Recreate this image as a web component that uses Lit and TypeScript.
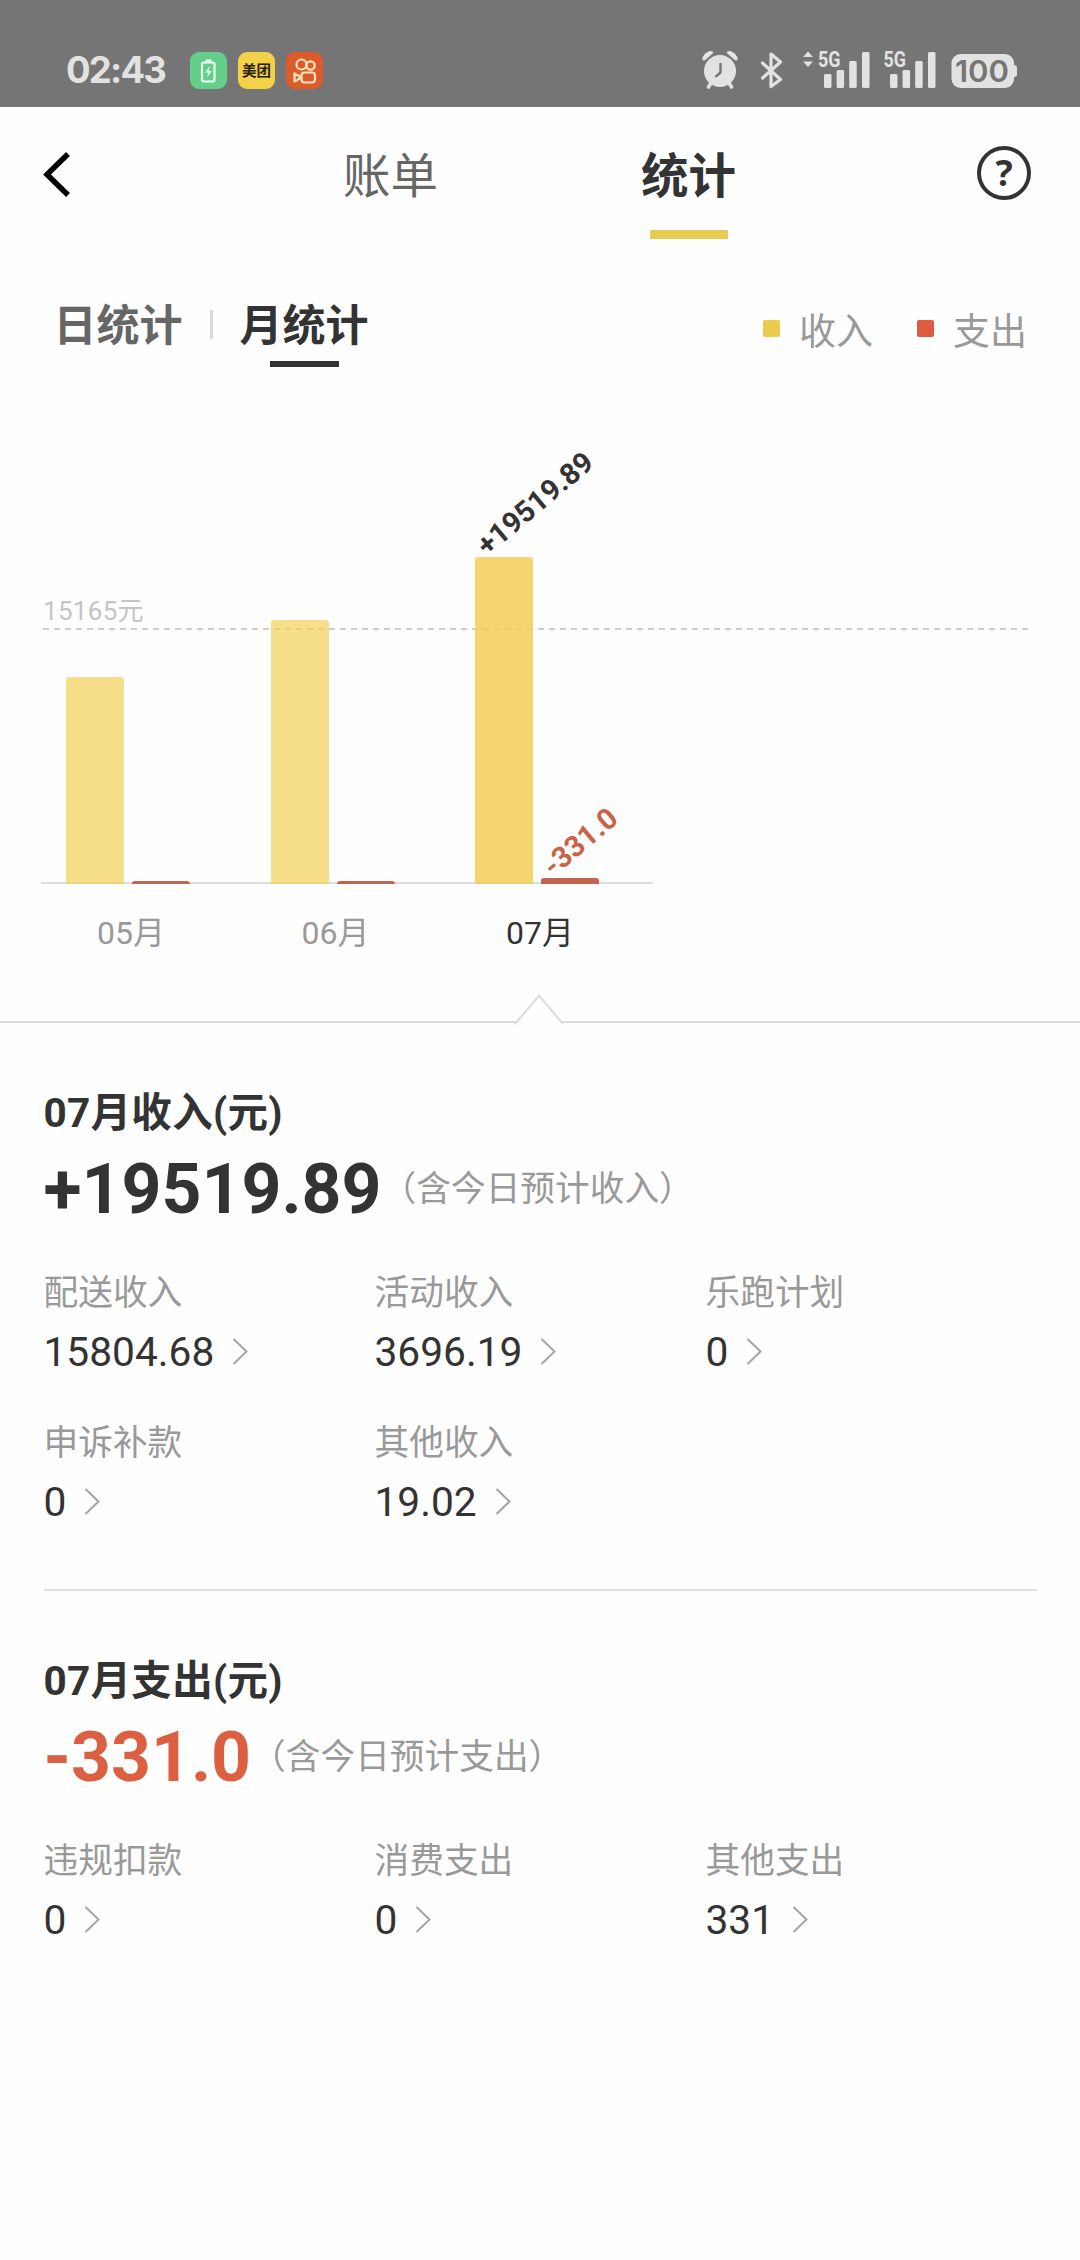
import { LitElement, html, css, svg } from "lit";
import { customElement, property } from "lit/decorators.js";

interface Item { label: string; value: string; }
interface Bar { month: string; income: number; expense: number; current?: boolean; }

const INCOME: Item[] = [
  { label: "配送收入", value: "15804.68" },
  { label: "活动收入", value: "3696.19" },
  { label: "乐跑计划", value: "0" },
  { label: "申诉补款", value: "0" },
  { label: "其他收入", value: "19.02" },
];
const EXPENSE: Item[] = [
  { label: "违规扣款", value: "0" },
  { label: "消费支出", value: "0" },
  { label: "其他支出", value: "331" },
];
const BARS: Bar[] = [
  { month: "05月", income: 207, expense: 3 },
  { month: "06月", income: 264, expense: 3 },
  { month: "07月", income: 327, expense: 6, current: true },
];

@customElement("status-bar")
class StatusBar extends LitElement {
  static styles = css`
    :host { display: flex; align-items: flex-start; justify-content: space-between; height: 107px; box-sizing: border-box; background: #757575; color: #e2e2e2; padding: 40px 61px 0 66px; }
    .side { display: flex; align-items: center; height: 40px; margin-top: 10px; }
    .time { font: 650 36.5px/40px Inter, sans-serif; width: 124px; letter-spacing: -1.8px; }
    .app { width: 37px; height: 37px; border-radius: 9px; margin-right: 11px; display: flex; align-items: center; justify-content: center; }
    .green { background: #63cf88; }
    .yellow { background: #f3d148; color: #2a2210; font: 700 14.5px/20px "Noto Sans CJK SC", sans-serif; }
    .orange { background: #dd5a2a; }
    svg { display: block; }
    .icons text { font: 700 21.5px Roboto, sans-serif; fill: #e2e2e2; }
    .icons .full { font: 600 30px Inter, sans-serif; fill: #757575; }
  `;
  render() {
    const signal = (x: number) => svg`
      <rect x=${x} y="34" width="7.5" height="14" rx="1.5"/>
      <rect x=${x + 12.6} y="30" width="7.5" height="18" rx="1.5"/>
      <rect x=${x + 25.2} y="21" width="7.5" height="27" rx="1.5"/>
      <rect x=${x + 38} y="12" width="7.5" height="36" rx="1.5"/>`;
    return html`
      <div class="side">
        <span class="time">02:43</span>
        <span class="app green"><svg width="37" height="37" viewBox="0 0 37 37"><path d="M15.500 9h6" stroke="#e9fff0" stroke-width="3"/><rect x="12" y="10.500" width="12.500" height="19" rx="2" fill="none" stroke="#e9fff0" stroke-width="2.200"/><path d="M19.800 14l-4.600 6.600h3l-1 5 4.600-6.600h-3z" fill="#e9fff0"/></svg></span>
        <span class="app yellow">美团</span>
        <span class="app orange"><svg width="37" height="37" viewBox="0 0 37 37" fill="none" stroke="#ffe3bd" stroke-width="2.200"><circle cx="15.500" cy="12.500" r="5"/><circle cx="24.500" cy="13.500" r="4.200"/><rect x="15.500" y="20.500" width="13.500" height="10" rx="3"/><path d="M15.500 25.500L8.500 21.500v8z" stroke-linejoin="round"/></svg></span>
      </div>
      <svg class="icons" width="320" height="52" viewBox="0 0 320 52" fill="#e2e2e2">
        <circle cx="21" cy="31" r="16"/>
        <path d="M12 43l-2.500 4M30 43l2.500 4" stroke="#e2e2e2" stroke-width="3.600" stroke-linecap="round"/>
        <path d="M4.500 20.500Q2.500 20 4 16.500 7 11.500 11.500 11 15 11.200 14 13.200L6 20.200ZM37.500 20.500Q39.500 20 38 16.500 35 11.500 30.500 11 27 11.200 28 13.200L36 20.200Z"/>
        <path d="M21.500 24v8.500l-4.500 3.800" fill="none" stroke="#757575" stroke-width="2.400" stroke-linecap="round"/>
        <path d="M63.500 23L81.500 39.500 72 46.500V14L81.500 22 63.500 38" fill="none" stroke="#e2e2e2" stroke-width="3.200" stroke-linejoin="round" stroke-linecap="round"/>
        <path d="M104 17l5-5.500 5 5.500zM104 21.500l5 5.500 5-5.500z"/>
        <text x="119" y="27" textLength="22.500" lengthAdjust="spacingAndGlyphs">5G</text>
        ${signal(125)}
        <text x="184.500" y="27" textLength="22.500" lengthAdjust="spacingAndGlyphs">5G</text>
        ${signal(191)}
        <rect x="252.500" y="14" width="62.500" height="34" rx="9"/>
        <path d="M315 25q3 0 3 3v6q0 3-3 3z"/>
        <text class="full" x="256" y="42" textLength="54" lengthAdjust="spacingAndGlyphs">100</text>
      </svg>`;
  }
}

@customElement("amount-section")
class AmountSection extends LitElement {
  @property() heading = "";
  @property() total = "";
  @property() note = "";
  @property({ type: Boolean }) negative = false;
  @property({ attribute: false }) items: Item[] = [];
  static styles = css`
    :host { display: block; }
    .heading { font-weight: 700; font-size: 40.5px; letter-spacing: 0.3px; line-height: 56px; color: #333; }
    .sum { display: flex; align-items: center; height: 96px; color: #333; }
    .total { font-weight: 700; font-size: 69.7px; line-height: 96px; }
    .neg { color: #dc5f41; }
    .note { font-size: 34.7px; line-height: 50px; color: #999; margin-left: 0; }
    .grid { display: grid; grid-template-columns: repeat(3, 331px); row-gap: 36.5px; margin-top: 31px; }
    .label { font-size: 34.7px; line-height: 50px; color: #999; }
    .value { display: flex; align-items: center; height: 60px; margin-top: 3.5px; font-size: 40.7px; line-height: 60px; color: #333; }
    .value svg { margin-left: 17px; }
  `;
  render() {
    return html`
      <div class="heading">${this.heading}</div>
      <div class="sum"><span class="total ${this.negative ? "neg" : ""}">${this.total}</span><span class="note">${this.note}</span></div>
      <div class="grid">${this.items.map((i) => html`
        <div><div class="label">${i.label}</div>
        <div class="value">${i.value}<svg width="18" height="30" viewBox="0 0 18 30" fill="none" stroke="#a4a4a4" stroke-width="2"><path d="M2.500 2l13 12.500L2.500 27"/></svg></div></div>`)}
      </div>`;
  }
}

@customElement("month-chart")
class MonthChart extends LitElement {
  static styles = css`
    :host { display: block; position: relative; height: 633px; border-bottom: 2px solid #dcdcdc; box-sizing: border-box; }
    .plot { position: relative; display: flex; align-items: flex-end; width: 613.5px; margin-left: 41px; height: 494px; box-sizing: border-box; }
    .month { width: 204.5px; display: flex; align-items: flex-end; gap: 8px; padding-left: 25px; box-sizing: border-box; }
    .bar { width: 58px; border-radius: 3px 3px 0 0; }
    .in { background: rgba(244, 210, 88, 0.7); }
    .in.now { background: rgba(243, 206, 87, 0.85); }
    .out { background: #c2654f; }
    .axis { position: absolute; left: 41px; width: 612px; top: 492px; height: 1.5px; background: #dedede; }
    .names { display: flex; margin-left: 41px; padding-top: 26px; }
    .name { width: 204.5px; padding-left: 56px; box-sizing: border-box; font-size: 32px; line-height: 46px; color: #999; }
    .name.now { color: #333; }
    .ref { position: absolute; left: 43px; top: 204px; width: 989px; font-size: 26px; letter-spacing: 0.3px; line-height: 35px; color: #c4c4c4; }
    .dash { display: block; margin-top: -1.5px; }
    .tip { position: absolute; font-weight: 700; font-size: 29.2px; line-height: 32px; transform-origin: 0 100%; transform: rotate(-40deg); color: #333; white-space: nowrap; }
    .plus { left: 491px; top: 139px; }
    .minus { left: 557px; top: 460px; color: #c9624a; }
    .notch { position: absolute; left: 513px; top: 603px; }
  `;
  render() {
    return html`
      <div class="axis"></div>
      <div class="ref">15165元<svg class="dash" width="989" height="2" viewBox="0 0 989 2"><path d="M0 1h989" stroke="#bdbdbd" stroke-width="1.500" stroke-dasharray="6 5"/></svg></div>
      <div class="plot">${BARS.map((b) => html`
        <div class="month">
          <div class="bar in ${b.current ? "now" : ""}" style="height:${b.income}px"></div>
          <div class="bar out" style="height:${b.expense}px"></div>
        </div>`)}
      </div>
      <div class="tip plus">+19519.89</div>
      <div class="tip minus">-331.0</div>
      <div class="names">${BARS.map((b) => html`<div class="name ${b.current ? "now" : ""}">${b.month}</div>`)}</div>
      <svg class="notch" width="52" height="32" viewBox="0 0 52 32"><path d="M2 31L26 2.500 50 31z" fill="#fefefe"/><path d="M2 31L26 2.500 50 31" fill="none" stroke="#dcdcdc" stroke-width="2"/></svg>`;
  }
}

@customElement("app-root")
class AppRoot extends LitElement {
  static styles = css`
    :host { display: block; width: 1080px; height: 2260px; overflow: hidden; background: #fefefe; color: #333; font-family: Roboto, "Noto Sans CJK SC", sans-serif; }
    .nav { display: grid; grid-template-columns: 241.5px 298px 298px 242.5px; height: 135px; box-sizing: border-box; padding-top: 38px; }
    .back { margin: 5px 0 0 41px; }
    .help { margin: 0 0 0 138px; }
    .help text { font: 700 36px "Noto Sans", sans-serif; fill: #333; }
    .tab { display: flex; flex-direction: column; align-items: center; font-size: 47.5px; line-height: 60px; padding-top: 1.5px; color: #666; }
    .tab.on { font-weight: 700; color: #333; }
    .mark { width: 78px; height: 9px; border-radius: 1px; background: #e8ca52; margin-top: 23.5px; }
    .sub { display: flex; height: 148px; box-sizing: border-box; padding: 54px 53px 0 53.5px; }
    .mode { font-size: 43px; line-height: 60px; font-weight: 700; color: #666; display: flex; flex-direction: column; align-items: center; }
    .mode.on { color: #333; }
    .line { width: 69px; height: 6px; background: #333; margin-top: 5px; }
    .sep { width: 3px; height: 29px; margin: 14px 27px 0; background: #d8d8d8; }
    .legend { display: flex; margin: 7px 0 0 auto; align-items: center; height: 60px; color: #999; font-size: 37px; line-height: 60px; }
    .dot { width: 17px; height: 17px; border-radius: 2px; margin-right: 19px; margin-top: -9px; }
    .y { background: #edca50; }
    .r { background: #dd5c41; margin-left: 44px; }
    .body { padding: 62px 43.5px 0; }
    .rule { height: 2px; background: #e0e0e0; margin: 57.5px 0 62px; }
  `;
  render() {
    return html`
      <status-bar></status-bar>
      <div class="nav">
        <svg class="back" width="32" height="50" viewBox="0 0 32 50"><path d="M27 4L6 24.500 27 45" fill="none" stroke="#000" stroke-width="5.500"/></svg>
        <div class="tab">账单</div>
        <div class="tab on">统计<span class="mark"></span></div>
        <svg class="help" width="56" height="56" viewBox="0 0 56 56"><circle cx="28" cy="28" r="25" fill="none" stroke="#333" stroke-width="4"/><text x="28" y="41" text-anchor="middle">?</text></svg>
      </div>
      <div class="sub">
        <div class="mode">日统计</div><div class="sep"></div>
        <div class="mode on">月统计<span class="line"></span></div>
        <div class="legend"><span class="dot y"></span>收入<span class="dot r"></span>支出</div>
      </div>
      <month-chart></month-chart>
      <div class="body">
        <amount-section heading="07月收入(元)" total="+19519.89" note="（含今日预计收入）" .items=${INCOME}></amount-section>
        <div class="rule"></div>
        <amount-section heading="07月支出(元)" total="-331.0" note="（含今日预计支出）" negative .items=${EXPENSE}></amount-section>
      </div>`;
  }
}
